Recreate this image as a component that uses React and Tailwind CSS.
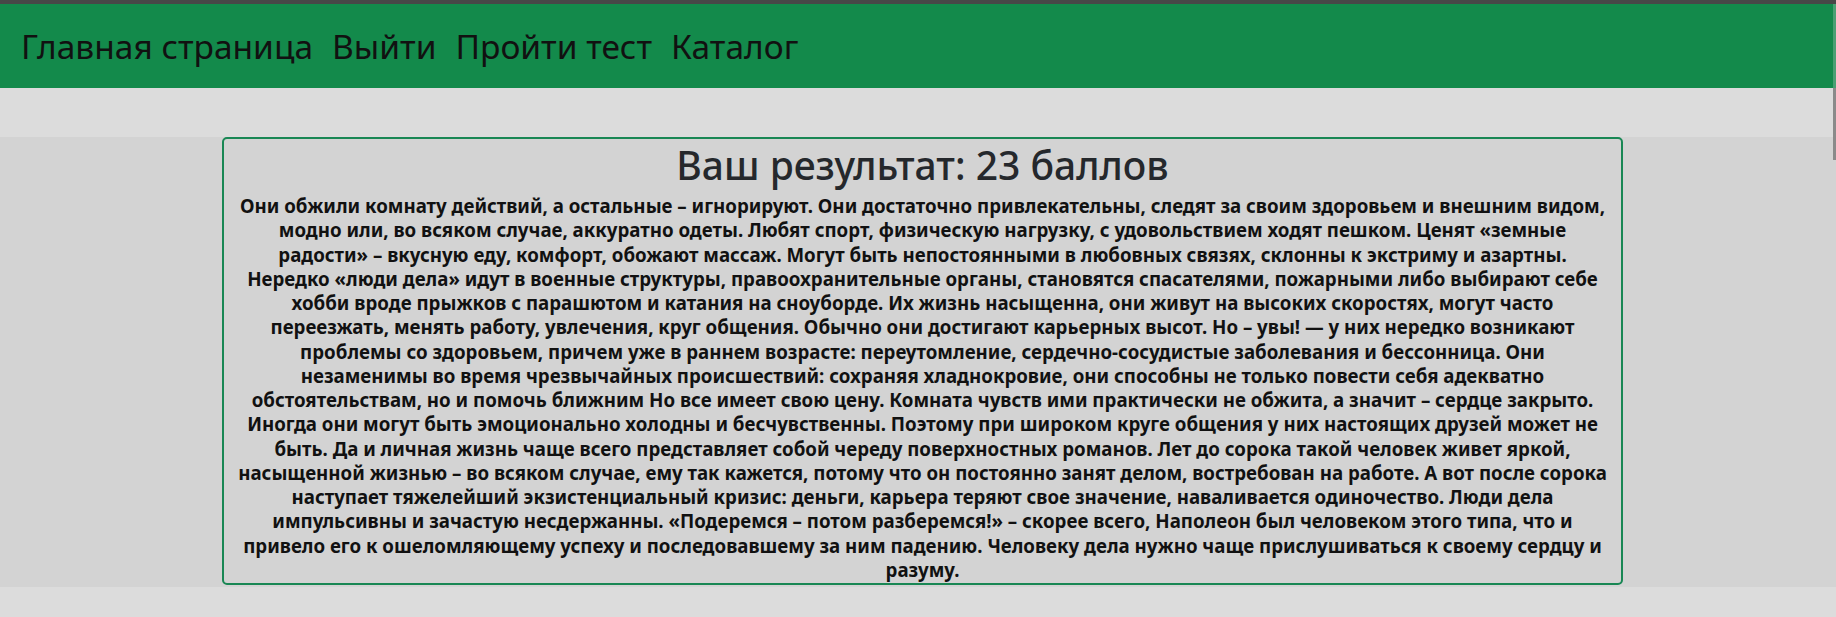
import React from "react";

const lines = [
  "Они обжили комнату действий, а остальные – игнорируют. Они достаточно привлекательны, следят за своим здоровьем и внешним видом,",
  "модно или, во всяком случае, аккуратно одеты. Любят спорт, физическую нагрузку, с удовольствием ходят пешком. Ценят «земные",
  "радости» – вкусную еду, комфорт, обожают массаж. Могут быть непостоянными в любовных связях, склонны к экстриму и азартны.",
  "Нередко «люди дела» идут в военные структуры, правоохранительные органы, становятся спасателями, пожарными либо выбирают себе",
  "хобби вроде прыжков с парашютом и катания на сноуборде. Их жизнь насыщенна, они живут на высоких скоростях, могут часто",
  "переезжать, менять работу, увлечения, круг общения. Обычно они достигают карьерных высот. Но – увы! — у них нередко возникают",
  "проблемы со здоровьем, причем уже в раннем возрасте: переутомление, сердечно-сосудистые заболевания и бессонница. Они",
  "незаменимы во время чрезвычайных происшествий: сохраняя хладнокровие, они способны не только повести себя адекватно",
  "обстоятельствам, но и помочь ближним Но все имеет свою цену. Комната чувств ими практически не обжита, а значит – сердце закрыто.",
  "Иногда они могут быть эмоционально холодны и бесчувственны. Поэтому при широком круге общения у них настоящих друзей может не",
  "быть. Да и личная жизнь чаще всего представляет собой череду поверхностных романов. Лет до сорока такой человек живет яркой,",
  "насыщенной жизнью – во всяком случае, ему так кажется, потому что он постоянно занят делом, востребован на работе. А вот после сорока",
  "наступает тяжелейший экзистенциальный кризис: деньги, карьера теряют свое значение, наваливается одиночество. Люди дела",
  "импульсивны и зачастую несдержанны. «Подеремся – потом разберемся!» – скорее всего, Наполеон был человеком этого типа, что и",
  "привело его к ошеломляющему успеху и последовавшему за ним падению. Человеку дела нужно чаще прислушиваться к своему сердцу и",
  "разуму.",
];

export default function App() {
  return (
    <div
      className="relative w-[1836px] h-[617px] overflow-hidden bg-[#dcdcdc]"
      style={{ fontFamily: '"Noto Sans", "DejaVu Sans", sans-serif' }}
    >
      <div className="h-[4px] bg-[#474747]" />
      <nav className="h-[84px] bg-[#138a4b] flex items-center pl-[21px] gap-[19px] text-[33.5px] text-[#111111]">
        <a>Главная страница</a>
        <a>Выйти</a>
        <a>Пройти тест</a>
        <a>Каталог</a>
      </nav>
      <div className="h-[49px]" />
      <section className="bg-[#d3d3d3] pl-[222px] pb-[2px]">
        <div className="w-[1401px] h-[448px] border-2 border-[#198754] rounded-[5px] flex flex-col items-center">
          <h2 className="text-[39px] font-medium leading-[47px] text-[#25282c] mt-[2px]">
            Ваш результат: 23 баллов
          </h2>
          <div className="mt-[6px] text-[18.7px] font-bold leading-[24.25px] text-[#111111] text-center">
            {lines.map((l, i) => (
              <div key={i} className="whitespace-nowrap">
                {l}
              </div>
            ))}
          </div>
        </div>
      </section>
      <div className="absolute right-0 top-[4px] w-[3px] h-[84px] bg-[#4aa073]" />
      <div className="absolute right-0 top-[88px] w-[3px] h-[72px] bg-[#8a8a8a]" />
    </div>
  );
}
